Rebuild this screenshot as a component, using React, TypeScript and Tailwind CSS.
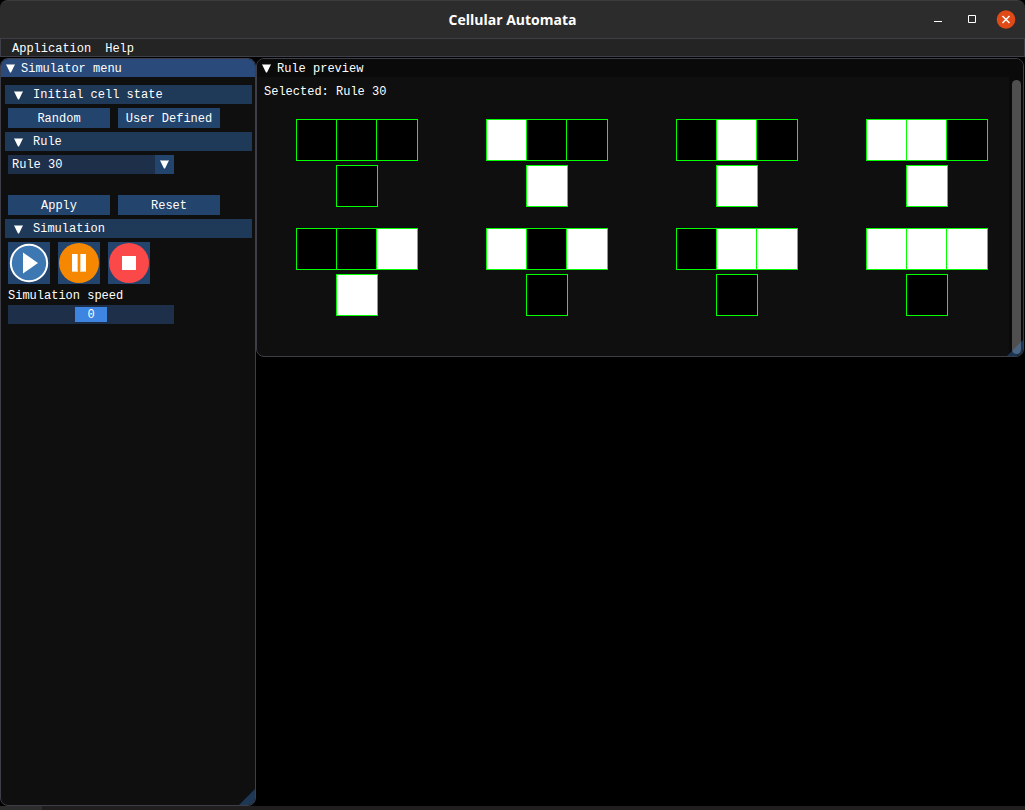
import { useState, type ReactNode } from "react";

const RULES = [30, 90, 110, 184];

const NEIGHBOURHOODS = [
  [0, 0, 0],
  [1, 0, 0],
  [0, 1, 0],
  [1, 1, 0],
  [0, 0, 1],
  [1, 0, 1],
  [0, 1, 1],
  [1, 1, 1],
];

// The leftmost cell is the lowest bit of the neighbourhood index.
function nextState(rule: number, [left, centre, right]: number[]) {
  return (rule >> (left + centre * 2 + right * 4)) & 1;
}

function Triangle() {
  return (
    <svg width="9" height="9" viewBox="0 0 9 9" aria-hidden="true" className="shrink-0">
      <path d="M0 0H9V1H0Z" fill="#fff" fillOpacity="0.5" />
      <path d="M0.3 1H8.7L5 8.6H4Z" fill="#fff" />
    </svg>
  );
}

function ResizeGrip() {
  return (
    <svg
      width="16"
      height="16"
      viewBox="0 0 16 16"
      aria-hidden="true"
      className="pointer-events-none absolute right-0 bottom-0"
    >
      <path d="M16 0V9Q16 16 9 16H0Z" fill="#4296fa" fillOpacity="0.3" />
    </svg>
  );
}

function Section({ title, children }: { title: string; children: ReactNode }) {
  const [open, setOpen] = useState(true);
  return (
    <section className="flex flex-col gap-1">
      <button
        type="button"
        aria-expanded={open}
        onClick={() => setOpen(!open)}
        className="flex h-[19px] items-center gap-[10px] bg-[#1f3958] pt-px pl-[9px] text-left"
      >
        <Triangle />
        {title}
      </button>
      {open && <div className="flex flex-col px-[3px]">{children}</div>}
    </section>
  );
}

function PushButton({ children }: { children: ReactNode }) {
  return (
    <button type="button" className="h-5 w-[102px] bg-[#23456d] pt-px text-center">
      {children}
    </button>
  );
}

function IconButton({ label, children }: { label: string; children: ReactNode }) {
  return (
    <button type="button" aria-label={label} className="size-[42px] bg-[#23456d]">
      <svg width="42" height="42" viewBox="0 0 42 42" aria-hidden="true">
        {children}
      </svg>
    </button>
  );
}

function Cell({ on }: { on: number }) {
  return (
    <div
      className={
        on
          ? "size-[42px] shrink-0 border border-[#00ff00] bg-white"
          : "size-[42px] shrink-0 border border-[#00ff00] bg-black"
      }
    />
  );
}

export default function App() {
  const [rule, setRule] = useState(30);
  const [speed, setSpeed] = useState(0);

  return (
    <div className="flex min-h-screen flex-col bg-black font-['Liberation_Mono',monospace] text-[12px] leading-[14px] text-white">
      <header className="grid h-[38px] grid-cols-[1fr_auto_1fr] items-center rounded-t-lg border-t border-[#3c3c3c] bg-[#2c2c2c]">
        <h1 className="col-start-2 font-['Open_Sans',sans-serif] text-[14px] leading-5 font-bold">
          Cellular Automata
        </h1>
        <div className="flex items-center justify-end gap-[14px] pr-[9px]">
          <button type="button" aria-label="Minimize" className="size-5">
            <svg width="20" height="20" viewBox="0 0 20 20">
              <path d="M6 11.5H14" stroke="#fff" strokeWidth="1" />
            </svg>
          </button>
          <button type="button" aria-label="Maximize" className="size-5">
            <svg width="20" height="20" viewBox="0 0 20 20">
              <path d="M6.5 5.5H13.5V12.5H6.5Z" fill="none" stroke="#fff" />
            </svg>
          </button>
          <button type="button" aria-label="Close" className="size-5">
            <svg width="20" height="20" viewBox="0 0 20 20">
              <circle cx="10" cy="9.5" r="9.3" fill="#e04a16" />
              <path d="M6.5 6L13.5 13M13.5 6L6.5 13" stroke="#fff" strokeWidth="1.5" />
            </svg>
          </button>
        </div>
      </header>

      <nav className="flex h-[19px] items-center gap-[14px] border border-[#3e3e48] bg-[#242424] pt-[2px] pl-[11px]">
        <button type="button">Application</button>
        <button type="button">Help</button>
      </nav>

      <main className="flex flex-1 items-start pt-px">
        <aside className="relative flex w-64 shrink-0 flex-col self-stretch overflow-hidden rounded-lg border border-[#3e3e48] bg-[#0f0f0f]">
          <h2 className="flex h-[18px] items-center gap-[6px] bg-[#294a7a] pt-px pl-[5px]">
            <Triangle />
            Simulator menu
          </h2>
          <div className="flex flex-col gap-1 pt-2 pr-[3px] pl-1">
            <Section title="Initial cell state">
              <div className="flex gap-2">
                <PushButton>Random</PushButton>
                <PushButton>User Defined</PushButton>
              </div>
            </Section>
            <Section title="Rule">
              <div className="relative w-[166px]">
                <select
                  aria-label="Rule"
                  value={rule}
                  onChange={(e) => setRule(Number(e.target.value))}
                  className="block h-[19px] w-full appearance-none rounded-none bg-[#1d2f49] pt-px pl-1"
                >
                  {RULES.map((r) => (
                    <option key={r} value={r}>
                      Rule {r}
                    </option>
                  ))}
                </select>
                <span className="pointer-events-none absolute inset-y-0 right-0 flex w-[19px] items-center justify-center bg-[#23456d]">
                  <Triangle />
                </span>
              </div>
              <div className="mt-[21px] flex gap-2">
                <PushButton>Apply</PushButton>
                <PushButton>Reset</PushButton>
              </div>
            </Section>
            <Section title="Simulation">
              <div className="flex gap-2">
                <IconButton label="Play">
                  <circle cx="21" cy="21" r="18.2" fill="#3d78b2" stroke="#fff" strokeWidth="2" />
                  <path d="M15 10.5L30 21L15 31.5Z" fill="#fff" />
                </IconButton>
                <IconButton label="Pause">
                  <circle cx="21" cy="21" r="20" fill="#f58800" />
                  <path d="M14 12H20V30H14ZM22 12H28V30H22Z" fill="#fbd3a0" />
                  <path d="M14 12H19V29H14ZM23 12H28V29H23Z" fill="#fff" />
                </IconButton>
                <IconButton label="Stop">
                  <circle cx="21" cy="21" r="20" fill="#fb4848" />
                  <path d="M14 14H28V28H14Z" fill="#fff" />
                </IconButton>
              </div>
              <label htmlFor="speed" className="mt-[5px]">
                Simulation speed
              </label>
              <div className="relative mt-[2px] h-[19px] w-[166px]">
                <input
                  id="speed"
                  type="range"
                  min={-10}
                  max={10}
                  value={speed}
                  onChange={(e) => setSpeed(Number(e.target.value))}
                  className="block h-[19px] w-full appearance-none bg-[#1d2f49] px-[2px] [&::-webkit-slider-thumb]:h-[15px] [&::-webkit-slider-thumb]:w-8 [&::-webkit-slider-thumb]:appearance-none [&::-webkit-slider-thumb]:bg-[#3d85e0]"
                />
                <output
                  htmlFor="speed"
                  className="pointer-events-none absolute inset-0 flex items-center justify-center pt-px"
                >
                  {speed}
                </output>
              </div>
            </Section>
          </div>
          <ResizeGrip />
        </aside>

        <section className="relative mr-px min-w-0 flex-1 overflow-hidden rounded-lg border border-[#3e3e48] bg-[#0f0f0f]">
          <h2 className="flex h-[18px] items-center gap-[6px] bg-[#0a0a0a] pt-px pl-[5px]">
            <Triangle />
            Rule preview
          </h2>
          <div className="flex">
            <div className="min-w-0 flex-1 pt-2 pb-10 pl-[7px]">
              <p>Selected: Rule {rule}</p>
              <div className="mt-5 ml-8 grid grid-cols-[repeat(auto-fill,122px)] gap-x-[68px] gap-y-[21px]">
                {NEIGHBOURHOODS.map((cells, i) => (
                  <div key={i} className="flex flex-col items-center gap-1">
                    <div className="flex -space-x-[2px]">
                      {cells.map((c, j) => (
                        <Cell key={j} on={c} />
                      ))}
                    </div>
                    <Cell on={nextState(rule, cells)} />
                  </div>
                ))}
              </div>
            </div>
            <div className="flex w-[14px] bg-[#0a0a0a] pt-[3px] pr-[2px] pb-[2px] pl-[3px]">
              <div className="flex-1 rounded-full bg-[#4f4f4f]" />
            </div>
          </div>
          <ResizeGrip />
        </section>
      </main>

      <footer className="flex h-1 bg-[#201e1f]">
        <div className="w-[42px] bg-[#2d2d2d]" />
      </footer>
    </div>
  );
}
